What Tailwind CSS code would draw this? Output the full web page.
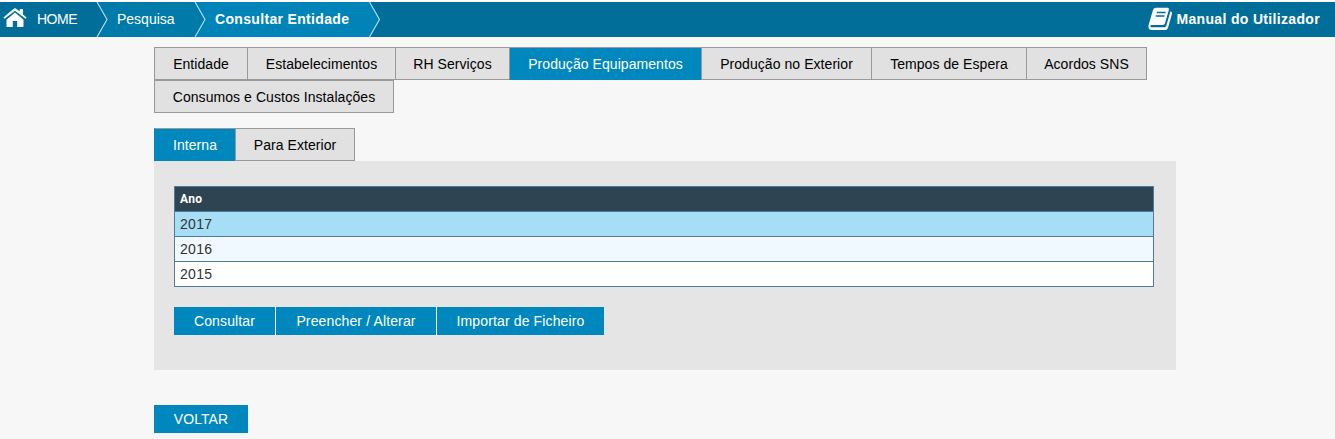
<!DOCTYPE html>
<html lang="pt">
<head>
<meta charset="utf-8">
<title>Consultar Entidade</title>
<script src="https://cdn.jsdelivr.net/npm/@tailwindcss/browser@4"></script>
</head>
<body class="h-[439px] overflow-hidden bg-[#f7f7f7] font-['Liberation_Sans',Arial,sans-serif] text-sm text-black">
<header class="relative flex h-[37px] items-center border-t-2 border-white bg-[#006e98] text-white">
  <svg class="absolute left-0 top-0" width="382" height="35" viewBox="0 0 382 35">
    <path d="M97 0H195L205 17.5L195 35H97L107 17.5Z" fill="#007aa9"/>
    <path d="M195 0H369.500L379.500 17.500L369.500 35H195L205 17.500Z" fill="#0084b7"/>
    <path d="M97 0L107 17.500L97 35M195 0L205 17.500L195 35M369.500 0L379.500 17.500L369.500 35" fill="none" stroke="#b5e2f5" stroke-width="1.100"/>
  </svg>
  <nav class="relative flex h-full items-center leading-[35px]">
    <svg class="-mt-[3px] ml-[3px] mr-[10px]" width="24" height="20" viewBox="0 0 24 20" fill="#fff">
      <path d="M12 4.600L20.500 11.700V18.300Q20.500 19 19.800 19H14.200V13H9.800V19H4.200Q3.500 19 3.500 18.300V11.700Z"/>
      <path d="M12 .3Q12.800 .3 13.500 .9L16.600 3.500V1.300H20V6.400L23.600 9.400L22.500 10.800L12 2.800L1.500 10.800L.4 9.400L10.500 .9Q11.200 .3 12 .3Z"/>
    </svg>
    <a class="w-20 tracking-[-0.5px]">HOME</a>
    <a class="w-[98px]">Pesquisa</a>
    <a class="font-bold tracking-[0.33px]">Consultar Entidade</a>
  </nav>
  <a class="ml-auto mr-[15px] flex items-center font-bold">
    <svg class="-mt-0.5 mr-[4px]" width="25" height="24" viewBox="0 0 25 24">
      <path d="M8 .8H19.500Q21.400 .8 20.900 2.700L17 16.300Q16.500 18 14.800 18H3.500Q2.300 18.100 2.400 19.300Q2.500 20.200 3.600 20.200H16.300Q17.800 20.200 18.300 18.700L22.500 4.200Q24.600 4.700 24 6.700L20 20.800Q19.300 23 17.200 23H4Q.5 23 .4 19.500Q.4 18.500 .8 17.300L5 2.900Q5.600 .8 8 .8Z" fill="#fff"/>
      <path d="M8.800 5.500H17.600M7.700 9H16.500" stroke="#006e98" stroke-width="1.400"/>
    </svg>
    <span class="-mt-0.5 tracking-[0.33px]">Manual do Utilizador</span>
  </a>
</header>

<main class="ml-[154px] w-[1022px] pt-[10px] leading-[31px] tracking-[0.06px]">
  <div class="flex text-center">
    <a class="h-[33px] w-[94px] border border-[#999] bg-[#e1e1e1] leading-[33px]">Entidade</a>
    <a class="-ml-px h-[33px] w-[149px] border border-[#999] bg-[#e1e1e1] leading-[33px]">Estabelecimentos</a>
    <a class="-ml-px h-[33px] w-[115px] border border-[#999] bg-[#e1e1e1] leading-[33px]">RH Serviços</a>
    <a class="-ml-px h-[33px] w-[193px] border border-[#999] border-b-[#0087be] bg-[#0087be] leading-[33px] text-white">Produção Equipamentos</a>
    <a class="-ml-px h-[33px] w-[171px] border border-[#999] bg-[#e1e1e1] leading-[33px]">Produção no Exterior</a>
    <a class="-ml-px h-[33px] w-[156px] border border-[#999] bg-[#e1e1e1] leading-[33px]">Tempos de Espera</a>
    <a class="-ml-px h-[33px] w-[121px] border border-[#999] bg-[#e1e1e1] leading-[33px]">Acordos SNS</a>
  </div>
  <div class="flex text-center">
    <a class="h-[33px] w-[240px] border border-[#999] bg-[#e1e1e1] leading-[33px]">Consumos e Custos Instalações</a>
  </div>
  <div class="mt-[15px] flex text-center">
    <a class="h-[33px] w-[82px] border border-[#0087be] border-t-[#999] bg-[#0087be] leading-[33px] text-white">Interna</a>
    <a class="-ml-px h-[33px] w-[120px] border border-[#999] bg-[#e1e1e1] leading-[33px]">Para Exterior</a>
  </div>
  <section class="h-[209px] bg-[#e5e5e5] px-5 pt-[25px]">
    <table class="w-[980px] border-collapse text-left leading-6 tracking-[0.3px] text-[#333]">
      <thead><tr class="h-[25px] bg-[#2f4453]"><th class="border border-[#527a9b] px-[5px] py-0 font-[Roboto] text-xs leading-6 font-bold text-white">Ano</th></tr></thead>
      <tbody>
        <tr class="h-[25px] bg-[#a6dff5]"><td class="border border-[#527a9b] px-[5px] py-0">2017</td></tr>
        <tr class="h-[25px] bg-[#f0f9ff]"><td class="border border-[#527a9b] px-[5px] py-0">2016</td></tr>
        <tr class="h-[25px] bg-white"><td class="border border-[#527a9b] px-[5px] py-0">2015</td></tr>
      </tbody>
    </table>
    <div class="mt-5 flex gap-px text-center leading-7 tracking-[0.13px] text-white">
      <a class="w-[101px] bg-[#0087be]">Consultar</a>
      <a class="w-[160px] bg-[#0087be] shadow-[-1px_0_0_#fff]">Preencher / Alterar</a>
      <a class="w-[167px] bg-[#0087be] shadow-[-1px_0_0_#fff]">Importar de Ficheiro</a>
    </div>
  </section>
  <a class="mt-[35px] block w-[94px] bg-[#0087be] text-center leading-7 text-white">VOLTAR</a>
</main>
</body>
</html>
